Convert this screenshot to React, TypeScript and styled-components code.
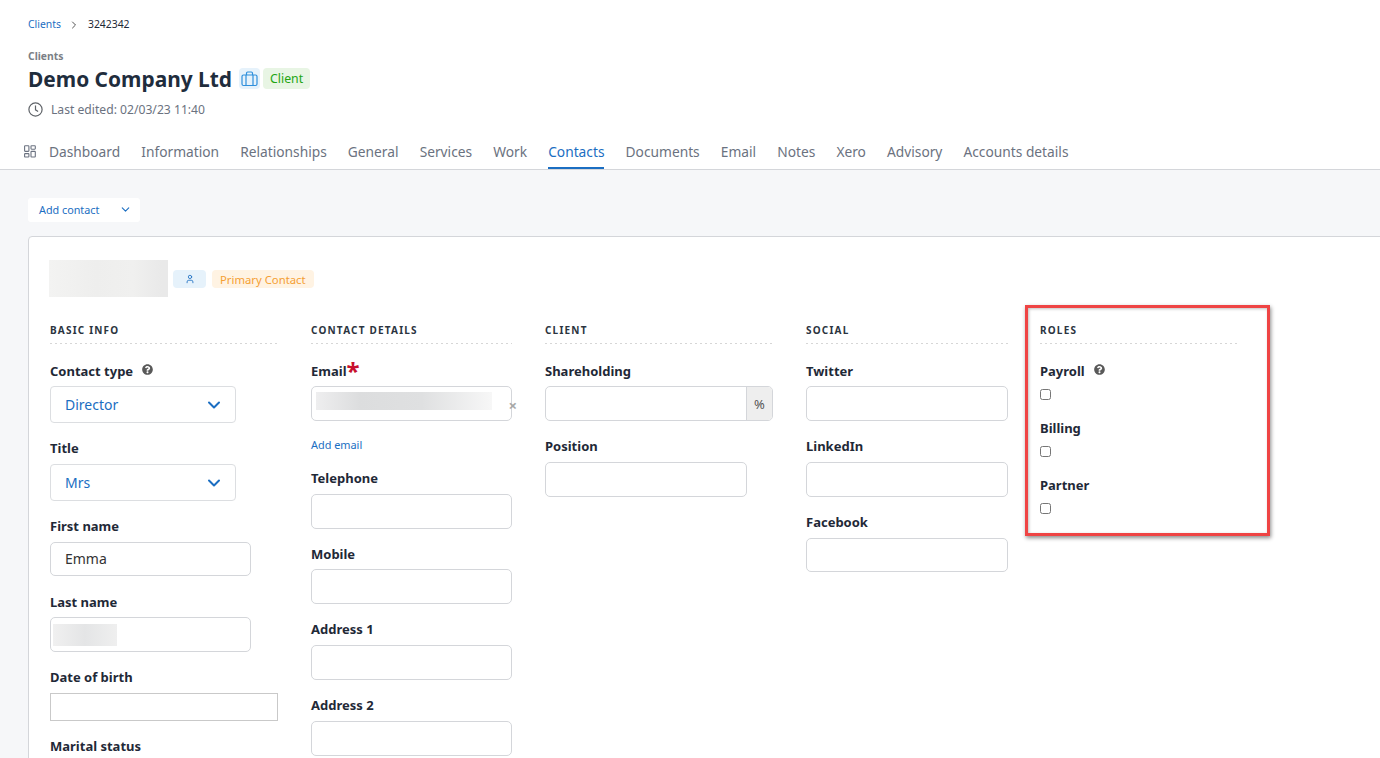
import React from "react";
import styled, { createGlobalStyle } from "styled-components";
import { ChevronDown, ChevronRight, User } from "lucide-react";
import { FaQuestionCircle } from "react-icons/fa";

const Global = createGlobalStyle`
  html, body { margin: 0; padding: 0; height: 758px; overflow: hidden; background: #f6f7f9; }
  body { font-family: "Noto Sans", "Open Sans", sans-serif; color: #1f2937; }
  * { box-sizing: border-box; }
`;

const Page = styled.div`
  position: relative;
  width: 1380px;
  height: 758px;
  overflow: hidden;
`;

const Header = styled.header`
  background: #fff;
  height: 170px;
  border-bottom: 1px solid #d4d6da;
  padding: 17px 0 0 28px;
`;

const Crumbs = styled.nav`
  display: flex;
  align-items: center;
  height: 15px;
  font-size: 10.4px;
  line-height: 15px;
  color: #1f2937;
`;

const CrumbLink = styled.span`
  color: #1b6ec2;
`;

const CrumbSep = styled(ChevronRight)`
  width: 12px;
  height: 12px;
  margin: 0 8px 0 7px;
  color: #555;
`;

const Eyebrow = styled.div`
  margin-top: 17px;
  font-size: 10.4px;
  line-height: 14px;
  font-weight: 700;
  color: #7b7f86;
`;

const TitleRow = styled.div`
  display: flex;
  align-items: center;
  height: 28px;
  margin-top: 2px;
`;

const Title = styled.h1`
  margin: 0 7px 0 0;
  font-size: 20.9px;
  line-height: 28px;
  font-weight: 700;
  color: #1f2d3d;
`;

const IconBadge = styled.span`
  display: inline-flex;
  align-items: center;
  justify-content: center;
  width: 21px;
  height: 21px;
  border-radius: 4px;
  background: #e6f2fb;
  color: #2f8fdc;
  margin: 0 3px 1px 0;
`;

const Tag = styled.span<{ $bg: string; $fg: string }>`
  display: inline-flex;
  align-items: center;
  height: 21px;
  padding: 0 7px;
  margin-bottom: 1px;
  border-radius: 4px;
  background: ${(p) => p.$bg};
  color: ${(p) => p.$fg};
  font-size: 12.3px;
`;

const Edited = styled.div`
  display: flex;
  align-items: center;
  height: 20px;
  margin-top: 6px;
  font-size: 12.15px;
  color: #6b7280;
  gap: 8px;
`;

const Tabs = styled.div`
  display: flex;
  align-items: stretch;
  height: 30px;
  margin: 19px 0 0 -4px;
  gap: 21.1px;
`;

const Tab = styled.div<{ $active?: boolean }>`
  display: flex;
  align-items: center;
  height: 31px;
  padding-bottom: 2px;
  font-size: 13.76px;
  color: ${(p) => (p.$active ? "#1b6ec2" : "#6b7280")};
  border-bottom: 2px solid ${(p) => (p.$active ? "#1b6ec2" : "transparent")};
  gap: 13px;
`;

const Content = styled.main`
  padding: 28px 0 0 28px;
`;

const AddButton = styled.div`
  display: flex;
  align-items: center;
  justify-content: space-between;
  width: 112px;
  height: 24px;
  padding: 0 8px 1px 11px;
  background: #fff;
  border-radius: 3px;
  color: #1b6ec2;
  font-size: 10.8px;
`;

const Card = styled.section`
  margin-top: 14px;
  width: 1400px;
  height: 600px;
  background: #fff;
  border: 1px solid #d4d6da;
  border-radius: 4px;
  padding: 23px 0 0 20px;
`;

const ContactHead = styled.div`
  display: flex;
  align-items: center;
  height: 37px;
  gap: 5px;
`;

const BlurName = styled.div`
  width: 119px;
  height: 37px;
  background: linear-gradient(90deg, #f3f3f2, #eeeeed 40%, #f0f0ef 70%, #e9e9e9 95%);
`;

const SmallBadge = styled.span`
  display: inline-flex;
  align-items: center;
  justify-content: center;
  width: 33px;
  height: 18px;
  border-radius: 4px;
  background: #e6f2fb;
  color: #1b6ec2;
`;

const PrimaryTag = styled.span`
  display: inline-flex;
  align-items: center;
  height: 18px;
  padding: 1px 8px 0;
  margin-left: 1px;
  border-radius: 4px;
  background: #fff3e3;
  color: #f5a033;
  font-size: 11.3px;
`;

const Columns = styled.div`
  display: flex;
  align-items: flex-start;
  margin-top: 25px;
  margin-left: 1px;
`;

const Column = styled.div<{ $w: number; $gap?: number }>`
  width: ${(p) => p.$w}px;
  margin-right: ${(p) => p.$gap ?? 33}px;
  flex: none;
`;

const SectionTitle = styled.h3`
  margin: 0 0 18px;
  height: 22px;
  padding-top: 1px;
  font-size: 10px;
  line-height: 14px;
  font-weight: 700;
  letter-spacing: 1.2px;
  color: #2b3440;
  background: repeating-linear-gradient(90deg, #d6d6d6 0 2px, transparent 2px 5px) left bottom / 100% 1px no-repeat;
`;

const Label = styled.div<{ $mt?: number; $mb?: number }>`
  display: flex;
  align-items: center;
  height: 18px;
  margin-top: ${(p) => p.$mt ?? 0}px;
  margin-bottom: ${(p) => p.$mb ?? 6}px;
  font-size: 13px;
  font-weight: 700;
  color: #1f2937;
`;

const Help = styled(FaQuestionCircle)`
  width: 11px;
  height: 11px;
  margin-left: 9px;
  margin-top: -3px;
  color: #595959;
`;

const Star = styled.span`
  color: #c8102e;
  font-size: 24px;
  line-height: 18px;
  height: 18px;
  font-weight: 700;
`;

const Select = styled.div`
  display: flex;
  align-items: center;
  justify-content: space-between;
  width: 186px;
  height: 37px;
  padding: 0 11px 0 14px;
  border: 1px solid #dcdee1;
  border-radius: 4px;
  color: #1b6ec2;
  font-size: 14px;
`;

const Input = styled.div<{ $w?: number; $h?: number }>`
  position: relative;
  display: flex;
  align-items: center;
  width: ${(p) => (p.$w ? `${p.$w}px` : "100%")};
  height: ${(p) => p.$h ?? 35}px;
  padding: 0 14px 1px;
  border: 1px solid #d4d6da;
  border-radius: 5px;
  font-size: 14px;
  color: #333;
`;

const SquareInput = styled.div`
  width: 100%;
  height: 28px;
  border: 1px solid #c9c9c9;
`;

const Blur = styled.div<{ $w: number; $h: number; $left: number; $top: number; $fade?: boolean }>`
  position: absolute;
  left: ${(p) => p.$left}px;
  top: ${(p) => p.$top}px;
  width: ${(p) => p.$w}px;
  height: ${(p) => p.$h}px;
  background: ${(p) =>
    p.$fade
      ? "linear-gradient(90deg, #eeeeef, #dcddde 25%, #dfe0e1 60%, #f7f7f7 100%)"
      : "linear-gradient(90deg, #f0f0f0, #e4e5e6 50%, #efefef 100%)"};
`;

const Clear = styled.span`
  position: absolute;
  right: -6px;
  top: 9px;
  font-size: 15px;
  line-height: 18px;
  font-weight: 700;
  color: #a8a8a8;
`;

const AddEmail = styled.div`
  margin-top: 16px;
  height: 16px;
  line-height: 16px;
  font-size: 10.9px;
  color: #1b6ec2;
`;

const InputGroup = styled.div`
  display: flex;
  height: 35px;
  border: 1px solid #d4d6da;
  border-radius: 5px;
  overflow: hidden;
`;

const GroupField = styled.div`
  flex: 1;
`;

const Addon = styled.div`
  display: flex;
  align-items: center;
  justify-content: center;
  width: 26px;
  background: #eeeeee;
  border-left: 1px solid #d4d6da;
  font-size: 13px;
  color: #555;
`;

const Check = styled.input.attrs({ type: "checkbox" })`
  display: block;
  width: 11px;
  height: 11px;
  margin: 0;
`;

const CheckRow = styled.div`
  height: 27px;
  padding-top: 3px;
`;

const Highlight = styled.div`
  position: absolute;
  left: 1025px;
  top: 305px;
  width: 245px;
  height: 231px;
  border: 3px solid #ef4444;
  box-shadow: 1px 2px 4px rgba(0, 0, 0, 0.45), inset 1px 1px 3px rgba(0, 0, 0, 0.25);
  pointer-events: none;
`;

const tabs = [
  "Information",
  "Relationships",
  "General",
  "Services",
  "Work",
  "Contacts",
  "Documents",
  "Email",
  "Notes",
  "Xero",
  "Advisory",
  "Accounts details",
];

const BriefcaseIcon = () => (
  <svg width="17" height="16" viewBox="0 0 17 16" fill="none" stroke="currentColor" strokeWidth="1.2">
    <rect x="1" y="4" width="15" height="10.5" rx="1.5" />
    <path d="M5.5 4V2.2C5.5 1.5 6 1 6.7 1h3.6c.7 0 1.2.5 1.2 1.2V4M5 4v10.5M12 4v10.5" />
  </svg>
);

const ClockIcon = () => (
  <svg width="15" height="15" viewBox="0 0 15 15" fill="none" stroke="#5f6368" strokeWidth="1.2">
    <circle cx="7.5" cy="7.5" r="6.6" />
    <path d="M7.5 3.6v4.2l2.6 1.6" />
  </svg>
);

const DashIcon = () => (
  <svg width="12" height="13" viewBox="0 0 12 13" fill="none" stroke="#6b7280" strokeWidth="1.1">
    <rect x="0.6" y="0.8" width="4.3" height="5.6" rx="0.6" />
    <rect x="7" y="0.8" width="4.3" height="3.4" rx="0.6" />
    <rect x="0.6" y="8.6" width="4.3" height="3.4" rx="0.6" />
    <rect x="7" y="6.4" width="4.3" height="5.6" rx="0.6" />
  </svg>
);

export default function App() {
  return (
    <Page>
      <Global />
      <Header>
        <Crumbs>
          <CrumbLink>Clients</CrumbLink>
          <CrumbSep />
          <span>3242342</span>
        </Crumbs>
        <Eyebrow>Clients</Eyebrow>
        <TitleRow>
          <Title>Demo Company Ltd</Title>
          <IconBadge>
            <BriefcaseIcon />
          </IconBadge>
          <Tag $bg="#e8f5e4" $fg="#22a512">Client</Tag>
        </TitleRow>
        <Edited>
          <ClockIcon />
          <span>Last edited: 02/03/23 11:40</span>
        </Edited>
        <Tabs>
          <Tab>
            <DashIcon />
            Dashboard
          </Tab>
          {tabs.map((t) => (
            <Tab key={t} $active={t === "Contacts"}>
              {t}
            </Tab>
          ))}
        </Tabs>
      </Header>
      <Content>
        <AddButton>
          Add contact
          <ChevronDown size={13} />
        </AddButton>
        <Card>
          <ContactHead>
            <BlurName />
            <SmallBadge>
              <User size={10} />
            </SmallBadge>
            <PrimaryTag>Primary Contact</PrimaryTag>
          </ContactHead>
          <Columns>
            <Column $w={228}>
              <SectionTitle>BASIC INFO</SectionTitle>
              <Label>
                Contact type
                <Help />
              </Label>
              <Select>
                Director
                <ChevronDown size={20} strokeWidth={2.4} />
              </Select>
              <Label $mt={16} $mb={7}>Title</Label>
              <Select>
                Mrs
                <ChevronDown size={20} strokeWidth={2.4} />
              </Select>
              <Label $mt={16} $mb={7}>First name</Label>
              <Input $w={201} $h={34}>Emma</Input>
              <Label $mt={17}>Last name</Label>
              <Input $w={201}>
                <Blur $w={64} $h={22} $left={2} $top={6} />
              </Input>
              <Label $mt={16} $mb={7}>Date of birth</Label>
              <SquareInput />
              <Label $mt={16}>Marital status</Label>
            </Column>
            <Column $w={201}>
              <SectionTitle>CONTACT DETAILS</SectionTitle>
              <Label>
                Email<Star>*</Star>
              </Label>
              <Input>
                <Blur $w={176} $h={18} $left={4} $top={5} $fade />
                <Clear>×</Clear>
              </Input>
              <AddEmail>Add email</AddEmail>
              <Label $mt={16} $mb={7}>Telephone</Label>
              <Input />
              <Label $mt={16}>Mobile</Label>
              <Input />
              <Label $mt={16} $mb={7}>Address 1</Label>
              <Input />
              <Label $mt={16} $mb={7}>Address 2</Label>
              <Input />
            </Column>
            <Column $w={228}>
              <SectionTitle>CLIENT</SectionTitle>
              <Label>Shareholding</Label>
              <InputGroup>
                <GroupField />
                <Addon>%</Addon>
              </InputGroup>
              <Label $mt={16} $mb={7}>Position</Label>
              <Input $w={202} />
            </Column>
            <Column $w={202} $gap={32}>
              <SectionTitle>SOCIAL</SectionTitle>
              <Label>Twitter</Label>
              <Input />
              <Label $mt={16} $mb={7}>LinkedIn</Label>
              <Input />
              <Label $mt={16} $mb={7}>Facebook</Label>
              <Input $h={34} />
            </Column>
            <Column $w={197}>
              <SectionTitle>ROLES</SectionTitle>
              <Label>
                Payroll
                <Help />
              </Label>
              <CheckRow>
                <Check />
              </CheckRow>
              <Label $mt={6}>Billing</Label>
              <CheckRow>
                <Check />
              </CheckRow>
              <Label $mt={6}>Partner</Label>
              <CheckRow>
                <Check />
              </CheckRow>
            </Column>
          </Columns>
        </Card>
      </Content>
      <Highlight />
    </Page>
  );
}
